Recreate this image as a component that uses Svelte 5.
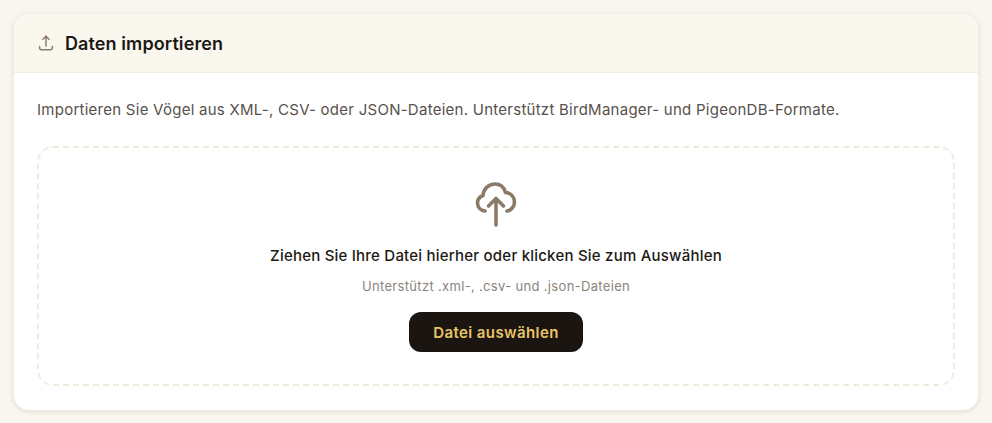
<script>
  const title = "Daten importieren";
</script>

<div class="page">
  <section class="card">
    <header class="card-head">
      <svg class="head-icon" viewBox="0 0 24 24" fill="none" stroke="currentColor" stroke-width="2" stroke-linecap="round" stroke-linejoin="round">
        <path d="M3.500 16.500v2A2.500 2.500 0 0 0 6 21h12a2.500 2.500 0 0 0 2.500-2.500v-2" />
        <path d="M8 7l4-4 4 4" />
        <path d="M12 3v13" />
      </svg>
      <h2>{title}</h2>
    </header>
    <div class="card-body">
      <p class="intro">Importieren Sie Vögel aus XML-, CSV- oder JSON-Dateien. Unterstützt BirdManager- und PigeonDB-Formate.</p>
      <div class="dropzone">
        <svg class="cloud" viewBox="0 0 48 48" fill="none" stroke="currentColor" stroke-width="3.600" stroke-linecap="round" stroke-linejoin="round">
          <path d="M13 30C8.500 29.500 5.500 26 5.500 22 5.500 18 8 15.500 11 14.500 11.500 7.500 17 3 23 3 28 3 32 6 33.500 11.500 38.500 11.500 42.500 16 42.500 21 42.500 25.500 39 29.500 35 30" />
          <path d="M24 44V18" />
          <path d="M16.500 25 24 17.500 31.500 25" />
        </svg>
        <p class="drop-title">Ziehen Sie Ihre Datei hierher oder klicken Sie zum Auswählen</p>
        <p class="drop-sub">Unterstützt .xml-, .csv- und .json-Dateien</p>
        <button class="pick" type="button">Datei auswählen</button>
      </div>
    </div>
  </section>
</div>

<style>
  :global(body) {
    background: #f9f6ef;
    font-family: "Inter", "Liberation Sans", sans-serif;
  }

  .page {
    padding: 13px;
  }

  .card {
    background: #fff;
    border-radius: 16px;
    border: 1px solid #f1ede2;
    box-shadow: 0 1px 4px rgba(60, 50, 30, 0.12);
    overflow: hidden;
  }

  .card-head {
    display: flex;
    align-items: center;
    gap: 10px;
    height: 58px;
    padding: 0 23px;
    background: #faf7ef;
    border-bottom: 1px solid #f1ede0;
  }

  .head-icon {
    width: 18px;
    height: 18px;
    color: #8c7a68;
  }

  h2 {
    margin: 0;
    font-size: 18px;
    font-weight: 600;
    color: #1c1814;
    letter-spacing: 0.1px;
  }

  .card-body {
    padding: 25px 23px 24px;
  }

  .intro {
    margin: 0 0 24px;
    font-size: 15px;
    line-height: 24px;
    letter-spacing: 0.26px;
    color: #57514b;
  }

  .dropzone {
    display: flex;
    flex-direction: column;
    align-items: center;
    padding: 33px 32px 32px;
    border: 2px dashed #efebdc;
    border-radius: 16px;
  }

  .cloud {
    width: 48px;
    height: 48px;
    color: #8c7a68;
    margin-bottom: 16px;
  }

  .drop-title {
    margin: 0 0 8px;
    font-size: 15px;
    font-weight: 500;
    line-height: 22px;
    letter-spacing: 0.22px;
    color: #1c1814;
  }

  .drop-sub {
    margin: 0 0 15px;
    font-size: 13px;
    line-height: 22px;
    letter-spacing: 0.33px;
    color: #8a847d;
  }

  .pick {
    height: 40px;
    width: 174px;
    border: 0;
    border-radius: 12px;
    background: #1a1510;
    color: #e8c468;
    font: 600 15px "Inter", sans-serif;
    letter-spacing: 0.4px;
  }
</style>
